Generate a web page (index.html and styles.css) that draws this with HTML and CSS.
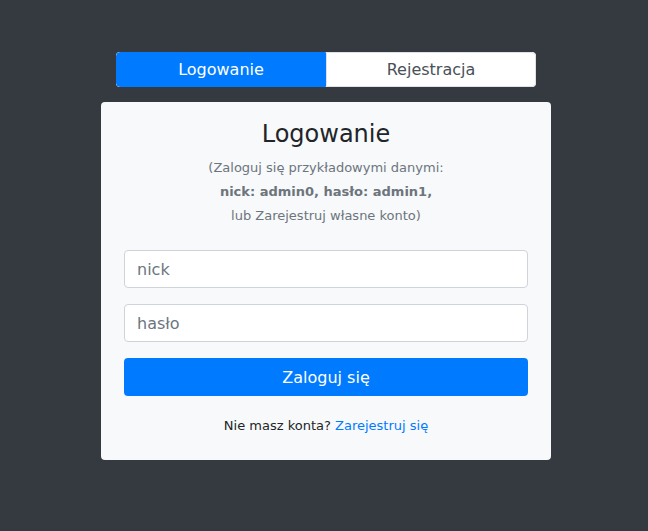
FILE: index.html
```
<!DOCTYPE html>
<html lang="pl">
<head>
<meta charset="utf-8">
<title>Logowanie</title>
<link rel="stylesheet" href="styles.css">
</head>
<body>
<div class="wrap">
  <div class="tabs">
    <button class="tab tab-active">Logowanie</button>
    <button class="tab">Rejestracja</button>
  </div>
  <div class="card">
    <h2 class="title">Logowanie</h2>
    <p class="hint">(Zaloguj się przykładowymi danymi:<br><b>nick: admin0, hasło: admin1,</b><br>lub Zarejestruj własne konto)</p>
    <form class="form">
      <input class="field" type="text" placeholder="nick">
      <input class="field" type="password" placeholder="hasło">
      <button class="submit" type="button">Zaloguj się</button>
    </form>
    <p class="foot">Nie masz konta? <a href="#" class="link">Zarejestruj się</a></p>
  </div>
</div>
</body>
</html>
```
FILE: styles.css
```
* { box-sizing: border-box; }
html, body { margin: 0; height: 100%; }
body {
  background: #343a40;
  font-family: "DejaVu Sans", sans-serif;
  color: #212529;
  padding-left: 4px;
}
.wrap {
  width: 450px;
  margin: 0 auto;
  padding-top: 52px;
  display: flex;
  flex-direction: column;
  align-items: center;
}
.tabs {
  width: 420px;
  height: 35px;
  display: flex;
  margin-bottom: 15px;
  border-radius: 4px;
  overflow: hidden;
  background: #fff;
}
.tab {
  flex: 1;
  border: 1px solid #dee2e6;
  background: #fff;
  color: #495057;
  font-family: inherit;
  font-size: 16px;
  padding: 0;
  border-radius: 0 4px 4px 0;
}
.tab-active {
  background: #007bff;
  border-color: #007bff;
  color: #fff;
  border-radius: 4px 0 0 4px;
}
.card {
  width: 450px;
  background: #f8f9fa;
  border-radius: 4px;
  padding: 18px 23px 24px;
  text-align: center;
}
.title {
  margin: 0 0 7px;
  font-size: 24px;
  font-weight: 400;
  line-height: 29px;
  color: #212529;
}
.hint {
  margin: 0 0 22px;
  font-size: 13px;
  line-height: 24px;
  color: #6c757d;
}
.hint b { font-weight: 700; }
.form {
  display: flex;
  flex-direction: column;
  gap: 16px;
}
.field {
  height: 38px;
  border: 1px solid #ced4da;
  border-radius: 4px;
  background: #fff;
  padding: 6px 12px;
  font-family: inherit;
  font-size: 16px;
  color: #495057;
}
.field::placeholder { color: #6c757d; }
.submit {
  height: 38px;
  border: none;
  border-radius: 4px;
  background: #007bff;
  color: #fff;
  font-family: inherit;
  font-size: 16px;
}
.foot {
  margin: 20px 0 0;
  font-size: 13px;
  line-height: 20px;
}
.link { color: #007bff; text-decoration: none; }
```
